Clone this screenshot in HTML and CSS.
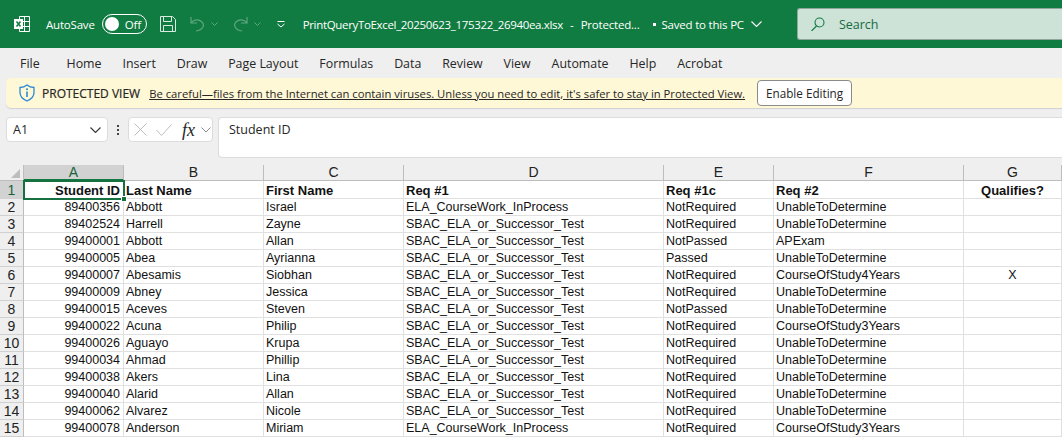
FILE: index.html
```html
<!DOCTYPE html>
<html lang="en">
<head>
<meta charset="utf-8">
<title>PrintQueryToExcel</title>
<link rel="stylesheet" href="styles.css">
</head>
<body>
<header class="titlebar">
  <svg class="ic-xl" width="16" height="16" viewBox="0 0 16 16" fill="none" stroke="#fff"><path d="M5.500 3v-2.500h10v15h-10v-3M10.500 .5v15M9 5.500h6.500M9 10.500h6.500"/><rect x="0" y="3" width="9" height="10" fill="#fff" stroke="none"/><path d="M2.500 5.500l4 5M6.500 5.500l-4 5" stroke="#107c41" stroke-width="1.500"/></svg>
  <span class="autosave">AutoSave</span>
  <span class="toggle"><i class="knob"></i><span>Off</span></span>
  <svg class="ic-save" width="16" height="16" viewBox="0 0 16 16" fill="none" stroke="#dcebe2"><path d="M.5 .5h12l3 3v12h-15zM3.500 .5v5h8v-5M3.500 15.500v-6h9v6"/></svg>
  <svg class="ic-undo" width="15" height="16" viewBox="0 0 15 16" fill="none" stroke="#5fa680" stroke-width="1.200"><path d="M1 1v6h6M1 7c3-4 8-4 11-1s1 8-6 9"/></svg>
  <svg class="ic-caret" width="7" height="4" viewBox="0 0 7 4" fill="none" stroke="#5fa680"><path d="M.5 .5l3 3 3-3"/></svg>
  <svg class="ic-redo" width="15" height="16" viewBox="0 0 15 16" fill="none" stroke="#5fa680" stroke-width="1.200"><path d="M14 1v6h-6M14 7c-3-4-8-4-11-1s-1 8 6 9"/></svg>
  <svg class="ic-caret" width="7" height="4" viewBox="0 0 7 4" fill="none" stroke="#5fa680"><path d="M.5 .5l3 3 3-3"/></svg>
  <svg class="ic-more" width="8" height="7" viewBox="0 0 8 7" fill="none" stroke="#fff"><path d="M.5 .5h7M.5 3l3.500 3 3.500-3"/></svg>
  <span class="filename">PrintQueryToExcel_20250623_175322_26940ea.xlsx</span>
  <span class="dash">-</span>
  <span class="prot">Protected...</span>
  <i class="dot"></i>
  <span class="saved">Saved to this PC</span>
  <svg class="ic-chev" width="11" height="6" viewBox="0 0 11 6" fill="none" stroke="#fff" stroke-width="1.100"><path d="M.5 .5l5 5 5-5"/></svg>
  <div class="search">
    <svg width="14" height="14" viewBox="0 0 14 14" fill="none" stroke="#107c41" stroke-width="1.100"><circle cx="8.500" cy="5.500" r="4.500"/><path d="M5.500 9l-5 5"/></svg>
    <span>Search</span>
  </div>
</header>
<nav class="menu">
  <span class="m-file">File</span><span>Home</span><span>Insert</span><span>Draw</span><span>Page Layout</span><span>Formulas</span><span>Data</span><span>Review</span><span>View</span><span>Automate</span><span>Help</span><span>Acrobat</span>
</nav>
<div class="notice">
  <svg width="16" height="18" viewBox="0 0 16 18" fill="none"><path d="M8 1c2 1.600 4 2.400 7 2.500v5c0 4-3 6.800-7 8.500-4-1.700-7-4.500-7-8.500v-5c3-.1 5-.9 7-2.500z" stroke="#2b88d8" stroke-width="1.300"/><path d="M8 7.500v5.500" stroke="#2b88d8" stroke-width="1.600"/><circle cx="8" cy="5.300" r="1" fill="#2b88d8"/></svg>
  <strong>PROTECTED VIEW</strong>
  <a>Be careful—files from the Internet can contain viruses. Unless you need to edit, it's safer to stay in Protected View.</a>
  <button>Enable Editing</button>
</div>
<div class="formula">
  <div class="namebox"><span>A1</span><svg width="11" height="6" viewBox="0 0 11 6" fill="none" stroke="#333" stroke-width="1.100"><path d="M.5 .5l5 5 5-5"/></svg></div>
  <div class="dots"><i></i><i></i><i></i></div>
  <div class="fxbox">
    <svg width="13" height="13" viewBox="0 0 13 13" fill="none" stroke="#bdbdbd"><path d="M.5 .5l12 12M12.500 .5l-12 12"/></svg>
    <svg width="16" height="12" viewBox="0 0 16 12" fill="none" stroke="#bdbdbd"><path d="M.5 6l5 5.500 10-11"/></svg>
    <em>fx</em>
    <svg width="10" height="6" viewBox="0 0 10 6" fill="none" stroke="#888"><path d="M.5 .5l4.500 4.500 4.500-4.500"/></svg>
  </div>
  <div class="fbar">Student ID</div>
</div>
<main class="sheet">
  <div class="corner"><i></i></div>
  <div class="ch active">A</div><div class="ch">B</div><div class="ch">C</div><div class="ch">D</div><div class="ch">E</div><div class="ch">F</div><div class="ch">G</div>

  <div class="rh active">1</div><div class="c b r sel">Student ID<i class="handle"></i></div><div class="c b">Last Name</div><div class="c b">First Name</div><div class="c b">Req #1</div><div class="c b">Req #1c</div><div class="c b">Req #2</div><div class="c b m">Qualifies?</div>
  <div class="rh">2</div><div class="c r">89400356</div><div class="c">Abbott</div><div class="c">Israel</div><div class="c">ELA_CourseWork_InProcess</div><div class="c">NotRequired</div><div class="c">UnableToDetermine</div><div class="c m"></div>
  <div class="rh">3</div><div class="c r">89402524</div><div class="c">Harrell</div><div class="c">Zayne</div><div class="c">SBAC_ELA_or_Successor_Test</div><div class="c">NotRequired</div><div class="c">UnableToDetermine</div><div class="c m"></div>
  <div class="rh">4</div><div class="c r">99400001</div><div class="c">Abbott</div><div class="c">Allan</div><div class="c">SBAC_ELA_or_Successor_Test</div><div class="c">NotPassed</div><div class="c">APExam</div><div class="c m"></div>
  <div class="rh">5</div><div class="c r">99400005</div><div class="c">Abea</div><div class="c">Ayrianna</div><div class="c">SBAC_ELA_or_Successor_Test</div><div class="c">Passed</div><div class="c">UnableToDetermine</div><div class="c m"></div>
  <div class="rh">6</div><div class="c r">99400007</div><div class="c">Abesamis</div><div class="c">Siobhan</div><div class="c">SBAC_ELA_or_Successor_Test</div><div class="c">NotRequired</div><div class="c">CourseOfStudy4Years</div><div class="c m">X</div>
  <div class="rh">7</div><div class="c r">99400009</div><div class="c">Abney</div><div class="c">Jessica</div><div class="c">SBAC_ELA_or_Successor_Test</div><div class="c">NotRequired</div><div class="c">UnableToDetermine</div><div class="c m"></div>
  <div class="rh">8</div><div class="c r">99400015</div><div class="c">Aceves</div><div class="c">Steven</div><div class="c">SBAC_ELA_or_Successor_Test</div><div class="c">NotPassed</div><div class="c">UnableToDetermine</div><div class="c m"></div>
  <div class="rh">9</div><div class="c r">99400022</div><div class="c">Acuna</div><div class="c">Philip</div><div class="c">SBAC_ELA_or_Successor_Test</div><div class="c">NotRequired</div><div class="c">CourseOfStudy3Years</div><div class="c m"></div>
  <div class="rh">10</div><div class="c r">99400026</div><div class="c">Aguayo</div><div class="c">Krupa</div><div class="c">SBAC_ELA_or_Successor_Test</div><div class="c">NotRequired</div><div class="c">UnableToDetermine</div><div class="c m"></div>
  <div class="rh">11</div><div class="c r">99400034</div><div class="c">Ahmad</div><div class="c">Phillip</div><div class="c">SBAC_ELA_or_Successor_Test</div><div class="c">NotRequired</div><div class="c">UnableToDetermine</div><div class="c m"></div>
  <div class="rh">12</div><div class="c r">99400038</div><div class="c">Akers</div><div class="c">Lina</div><div class="c">SBAC_ELA_or_Successor_Test</div><div class="c">NotRequired</div><div class="c">UnableToDetermine</div><div class="c m"></div>
  <div class="rh">13</div><div class="c r">99400040</div><div class="c">Alarid</div><div class="c">Allan</div><div class="c">SBAC_ELA_or_Successor_Test</div><div class="c">NotRequired</div><div class="c">UnableToDetermine</div><div class="c m"></div>
  <div class="rh">14</div><div class="c r">99400062</div><div class="c">Alvarez</div><div class="c">Nicole</div><div class="c">SBAC_ELA_or_Successor_Test</div><div class="c">NotRequired</div><div class="c">UnableToDetermine</div><div class="c m"></div>
  <div class="rh">15</div><div class="c r">99400078</div><div class="c">Anderson</div><div class="c">Miriam</div><div class="c">ELA_CourseWork_InProcess</div><div class="c">NotRequired</div><div class="c">CourseOfStudy3Years</div><div class="c m"></div>
</main>
</body>
</html>
```
FILE: styles.css
```css
* { box-sizing: border-box; }
html, body { margin: 0; height: 437px; overflow: hidden; }
body { width: 1062px; background: #efefef; font-family: "Open Sans", "Liberation Sans", sans-serif; color: #262626; }

.titlebar { height: 48px; background: #107c41; color: #fff; display: flex; align-items: center; padding-left: 14px; font-size: 11.500px; white-space: nowrap; }
.titlebar > * { flex: none; }
.autosave { margin-left: 16px; letter-spacing: -.2px; }
.toggle { width: 45px; height: 20px; margin-left: 7px; border: 1px solid #fff; border-radius: 10px; display: flex; align-items: center; padding-left: 2px; gap: 6px; }
.knob { width: 14px; height: 14px; border-radius: 50%; background: #fff; }
.ic-save { margin-left: 13px; }
.ic-undo { margin-left: 14px; }
.ic-redo { margin-left: 15px; }
.ic-caret { margin-left: 6px; }
.ic-more { margin-left: 16px; }
.filename { margin-left: 18px; letter-spacing: -.33px; }
.dash { margin-left: 7px; }
.prot { margin-left: 7px; letter-spacing: -.2px; }
.dot { width: 3px; height: 3px; background: #fff; margin-left: 14px; }
.saved { margin-left: 5px; letter-spacing: -.2px; }
.ic-chev { margin-left: 7px; }
.search { margin-left: 35px; width: 270px; height: 32px; background: #cde3d8; border: 1px solid #8fa89b; border-right: 0; border-radius: 3px 0 0 3px; display: flex; align-items: center; padding-left: 13px; gap: 14px; color: #17693e; font-size: 12.500px; }

.menu { height: 30px; display: flex; align-items: center; padding: 0 0 0 20px; font-size: 12.400px; gap: 20.900px; }
.m-file { margin-right: 6px; }

.notice { height: 30px; margin: 0 0 0 6px; background: #fff8d6; border-radius: 5px 0 0 5px; box-shadow: 0 1px 1px #d0d0d0; display: flex; align-items: center; padding-left: 13px; font-size: 12px; white-space: nowrap; }
.notice strong { font-weight: 400; margin-left: 7px; -webkit-text-stroke: .2px #262626; }
.notice a { margin-left: 9px; text-decoration: underline; font-size: 11.250px; }
.notice button { margin-left: 12px; width: 95px; height: 26px; background: #fff; border: 1px solid #8a8a8a; border-radius: 4px; font: inherit; font-size: 11.700px; color: #262626; padding: 0; }

.formula { height: 57px; padding: 9px 0 0 6px; display: flex; align-items: flex-start; }
.namebox { width: 102px; height: 25px; background: #fff; border: 1px solid #dcdcdc; border-radius: 4px; display: flex; align-items: center; justify-content: space-between; padding: 0 6px; font-size: 12.500px; }
.dots { width: 20px; height: 25px; display: flex; flex-direction: column; align-items: center; justify-content: center; gap: 2px; }
.dots i { width: 2px; height: 2px; background: #444; }
.fxbox { width: 85px; height: 25px; background: #fff; border: 1px solid #dcdcdc; border-radius: 4px; display: flex; align-items: center; padding-left: 5px; gap: 9px; }
.fxbox em { font-family: "Liberation Serif", serif; font-size: 18px; margin-left: 1px; line-height: 20px; }
.fxbox em + svg { margin-left: -3px; }
.fbar { margin-left: 5px; flex: 1; height: 41px; background: #fff; border: 1px solid #dcdcdc; border-right: 0; border-radius: 4px 0 0 4px; padding: 3px 10px; font-size: 12.500px; }

.sheet { height: 272px; background: #fff; display: grid; grid-template-columns: 24px 100px 140px 140px 260px 110px 190px 98px; grid-template-rows: 16px 18px repeat(14, 17px); font-family: "Liberation Sans", sans-serif; font-size: 12.500px; color: #111; }
.corner { background: #efefef; border-right: 1px solid #bdbdbd; border-bottom: 1px solid #bdbdbd; position: relative; }
.corner i { position: absolute; right: 3px; bottom: 2px; width: 0; height: 0; border-left: 9px solid transparent; border-bottom: 9px solid #bdbdbd; }
.ch { background: #efefef; border-right: 1px solid #bdbdbd; border-bottom: 1px solid #bdbdbd; text-align: center; line-height: 15px; font-size: 14px; color: #222; }
.ch.active { background: #d2d2d2; color: #17633a; border-bottom: 2px solid #107c41; }
.rh { background: #efefef; border-right: 1px solid #bdbdbd; border-bottom: 1px solid #d0d0d0; text-align: center; line-height: 16px; font-size: 14px; color: #222; }
.rh.active { background: #d2d2d2; color: #17633a; line-height: 18px; }
.c { border-right: 1px solid #e0e0e0; border-bottom: 1px solid #e0e0e0; padding: 0 2px; line-height: 16px; white-space: nowrap; overflow: hidden; }
.c.b { line-height: 19px; font-size: 13px; }
.r { text-align: right; padding-right: 3px; }
.b { font-weight: 700; }
.m { text-align: center; }
.sel { outline: 2px solid #17703f; outline-offset: -1px; position: relative; overflow: visible; z-index: 1; }
.handle { position: absolute; right: -4px; bottom: -4px; background: #17703f; border: 1px solid #fff; box-sizing: content-box; width: 4px; height: 4px; }
```
